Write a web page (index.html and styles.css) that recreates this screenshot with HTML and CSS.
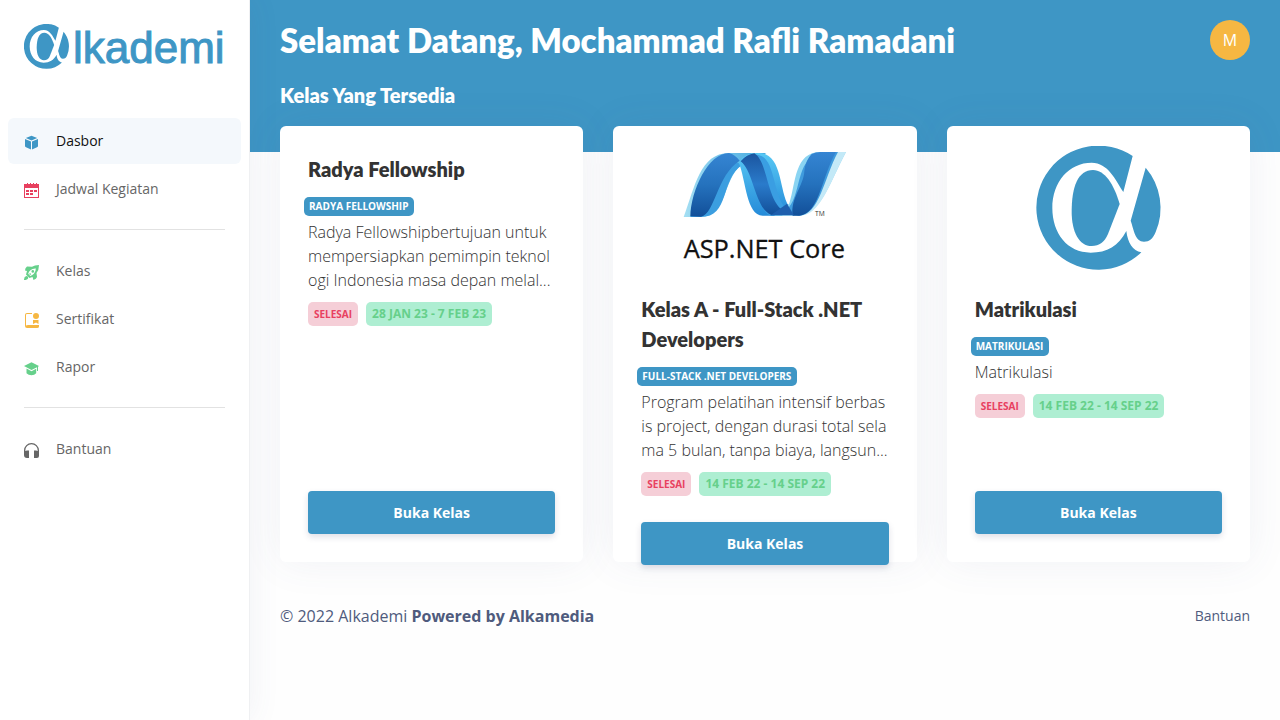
FILE: index.html
```html
<!DOCTYPE html>
<html lang="id">
<head>
<meta charset="utf-8">
<meta name="viewport" content="width=device-width, initial-scale=1">
<title>Alkademi - Dasbor</title>
<link rel="stylesheet" href="styles.css">
</head>
<body>
<svg class="defs" width="0" height="0" aria-hidden="true">
  <symbol id="alpha" viewBox="48 48 372 372">
    <path d="M336 78A186 186 0 1 0 362 367C336 362 321 338 317 303C293 348 260 368 210 368C140 368 95 310 95 235C95 155 145 98 213 98C262 98 285 150 308 186Z"/>
    <path d="M217 120C252 120 280 163 297 222L262 312C252 336 236 348 213 348C175 348 153 305 153 245C153 170 172 120 217 120Z"/>
    <path d="M375 113A186 186 0 0 1 405 306C396 328 386 335 370 335C343 335 340 300 330 272Z"/>
  </symbol>
</svg>
<div class="layout">
  <aside class="sidebar">
    <a class="brand" href="#"><svg class="brand-mark" aria-hidden="true"><use href="#alpha"/></svg><span>lkademi</span></a>
    <nav class="nav">
      <a class="nav-item active" href="#">
        <svg class="icon blue" viewBox="0 0 15 15"><path d="M7.500.8l5.700 2.300-5.700 2.400-5.700-2.400zM1 4l6 2.500v7.900L2 12.300Q1 11.900 1 11zM14 4L8 6.500v7.900l5-2.100q1-.4 1-1.300z"/></svg>
        Dasbor</a>
      <a class="nav-item" href="#">
        <svg class="icon red" viewBox="0 0 15 15"><path fill-rule="evenodd" d="M0 1h3V0h1v1h2V0h1v1h2V0h1v1h2V0h1v1h2v14H0zM1 5v9h13V5zM6 7h3v2H6zM10 7h3v2h-3zM2 7h3v2H2zM2 10h3v2H2zM6 10h3v2H6z"/></svg>
        Jadwal Kegiatan</a>
      <hr>
      <a class="nav-item" href="#">
        <svg class="icon green" viewBox="0 0 15 15"><path fill-rule="evenodd" d="M15 0Q10.500 0 8 1.700L3 1.500Q1 3 1 5.500l2 .5-1 3.500L5.500 13l3-1 1 3q3-1 3.500-3l-.5-4Q15 5 15 0zM11.800 3.400Q8.500 3.200 6.400 5.200 4.800 6.600 4.200 8.800L6.300 10.900Q8.500 10.300 9.900 8.700 11.900 6.600 11.800 3.400z"/><path d="M2.500 11q2 0 1.700 2Q3.500 15 0 15q-.1-3.500 2.500-4zM6 8l1.300 1.300L6 10 5.200 9z"/><circle cx="8.800" cy="6.400" r="1.300"/></svg>
        Kelas</a>
      <a class="nav-item" href="#">
        <svg class="icon amber" viewBox="0 0 15 15"><path d="M1 2Q1 0 3 0h5v1H3Q2 1 2 2v10.500Q3 12 4 12h11v1.500q0 1.500-2 1.500H3q-2 0-2-2z"/><circle cx="12" cy="3" r="3"/><path d="M9 7h5.500v4L12 9.500 9 11z"/></svg>
        Sertifikat</a>
      <a class="nav-item" href="#">
        <svg class="icon green" viewBox="0 0 15 15"><path d="M7.500 1.200L15 5l-1 .7V10h-1V6.200L7.500 9 0 5zM2.500 7.600l5 2.600 4.700-2.500v4.600q-1.700 2-4.700 2t-5-2z"/></svg>
        Rapor</a>
      <hr>
      <a class="nav-item" href="#">
        <svg class="icon gray" viewBox="0 0 15 15"><path d="M0 9V7.500a7.500 7.500 0 0 1 15 0V13q0 2-2 2h-3V7.500h2q1 0 1.700.5V7.500a6.200 6.200 0 0 0-12.400 0V8Q2 7.500 3 7.500h2V15H3q-3 0-3-3z"/></svg>
        Bantuan</a>
    </nav>
  </aside>
  <div class="main">
    <header class="hero">
      <div class="hero-top">
        <h1>Selamat Datang, Mochammad Rafli Ramadani</h1>
        <button class="avatar" type="button" aria-label="Akun">M</button>
      </div>
      <h2>Kelas Yang Tersedia</h2>
    </header>
    <main class="cards">
      <article class="card">
        <h3>Radya Fellowship</h3>
        <span class="program">RADYA FELLOWSHIP</span>
        <p>Radya Fellowshipbertujuan untuk mempersiapkan pemimpin teknologi Indonesia masa depan melal...</p>
        <div class="badges"><span class="status">SELESAI</span><span class="date">28 JAN 23 - 7 FEB 23</span></div>
        <button class="open" type="button">Buka Kelas</button>
      </article>
      <article class="card">
        <svg class="cover" viewBox="0 0 570 372" role="img" aria-label="ASP.NET Core">
          <defs>
            <linearGradient id="deep" x2="0" y2="1"><stop offset="0" stop-color="#3585d3"/><stop offset=".5" stop-color="#2572bd"/><stop offset="1" stop-color="#124f99"/></linearGradient>
            <linearGradient id="dusk" x2="0" y2="1"><stop offset="0" stop-color="#1b559f"/><stop offset=".5" stop-color="#2a7bcb"/><stop offset="1" stop-color="#124f99"/></linearGradient>
            <linearGradient id="bright" x2="0" y2="1"><stop offset="0" stop-color="#58c8f4"/><stop offset="1" stop-color="#258bd9"/></linearGradient>
            <linearGradient id="edge" x2="1" y2="0"><stop offset="0" stop-color="#a5dff3"/><stop offset="1" stop-color="#3fa6df"/></linearGradient>
          </defs>
          <g transform="translate(0 -48)">
            <path fill="url(#edge)" d="M42 261C75 173 91 69 178 69H290L252 90L215 105C160 147 172 261 93 261Z"/>
            <path fill="#3b9ee0" d="M62 261C92 190 127 96 168 79L217 105C150 150 182 261 93 261Z"/>
            <path fill="url(#deep)" d="M62 259C64 182 115 69 178 69Q196 74 210 92C140 137 137 250 94 260Z"/>
            <path fill="url(#bright)" d="M207 97Q224 69 267 69C339 69 328 183 357 228L337 257H279C230 257 229 151 207 97Z"/>
            <path fill="#3a9ee2" d="M236 80Q255 68 275 78C318 100 309 194 350 238L337 257H305C262 247 265 135 236 80Z"/>
            <path fill="url(#dusk)" d="M213 94Q231 73 254 70C294 94 291 206 338 240L320 255H305C256 237 253 125 213 94Z"/>
            <path fill="#8ad4f2" d="M359 220C379 158 374 66 453 66H529C480 157 452 257 386 257H313Q345 239 359 220Z"/>
            <path fill="#c3e9f7" d="M497 66H529C480 157 454 257 389 257C443 216 465 128 497 66Z"/>
            <path fill="#3f9bdd" d="M453 66H505C462 145 450 257 386 257L348 243C401 195 371 94 453 66Z"/>
            <path fill="url(#deep)" d="M426 72Q438 66 453 66H499C456 139 450 250 390 257H369C362 205 402 167 404 124Q407 91 426 72Z"/>
            <path fill="#1e5fae" d="M303 256L352 221 373 256Z"/>
            <text class="tm" x="436" y="258">TM</text>
            <text class="cover-name" x="42" y="384">ASP.NET Core</text>
          </g>
        </svg>
        <h3>Kelas A - Full-Stack .NET Developers</h3>
        <span class="program">FULL-STACK .NET DEVELOPERS</span>
        <p>Program pelatihan intensif berbasis project, dengan durasi total selama 5 bulan, tanpa biaya, langsun...</p>
        <div class="badges"><span class="status">SELESAI</span><span class="date">14 FEB 22 - 14 SEP 22</span></div>
        <button class="open" type="button">Buka Kelas</button>
      </article>
      <article class="card">
        <svg class="cover blue" role="img" aria-label="Alkademi"><use href="#alpha"/></svg>
        <h3>Matrikulasi</h3>
        <span class="program">MATRIKULASI</span>
        <p>Matrikulasi</p>
        <div class="badges"><span class="status">SELESAI</span><span class="date">14 FEB 22 - 14 SEP 22</span></div>
        <button class="open" type="button">Buka Kelas</button>
      </article>
    </main>
    <footer class="footer">
      <span>© 2022 Alkademi <strong>Powered by Alkamedia</strong></span>
      <a href="#">Bantuan</a>
    </footer>
  </div>
</div>
</body>
</html>
```
FILE: styles.css
```css
* { box-sizing: border-box; }
body { margin: 0; background: #fefefe; color: #333; font-family: "Open Sans", sans-serif; font-size: 16px; }
a { color: inherit; text-decoration: none; }
button { border: 0; font-family: inherit; cursor: pointer; }
h1, h2, h3, p { margin: 0; }
h1, h2, h3 { font-family: Lato, sans-serif; font-weight: 800; }
.defs { position: absolute; }
.layout { display: flex; min-height: 100vh; }

.sidebar { flex: 0 0 250px; padding: 24px 8px; background: #fff; border-right: 1px solid #eff0f2; box-shadow: 0 0 30px rgba(82, 90, 140, .08); z-index: 1; }
.brand { display: flex; align-items: center; gap: 4px; height: 45px; padding-left: 16px; color: #3e96c5; fill: #3e96c5; font: 44px/50px "Liberation Sans", sans-serif; -webkit-text-stroke: 1px #3e96c5; }
.brand span { padding-top: 3px; }
.brand-mark { width: 45px; height: 45px; }
.nav { display: flex; flex-direction: column; gap: 2px; margin-top: 49px; }
.nav-item { display: flex; align-items: center; gap: 17px; height: 46px; padding: 0 16px 2px; border-radius: 6px; color: #666; font-size: 14px; }
.nav-item.active { background: #f4f8fc; color: #111; }
.nav hr { width: calc(100% - 32px); margin: 15px 16px 16px; border: 0; border-top: 1px solid #e2e2e2; }
.icon { width: 15px; height: 15px; margin-top: 4px; }
.blue { fill: #3e96c5; }
.red { fill: #e8405f; }
.green { fill: #66d08b; }
.amber { fill: #f6b742; }
.gray { fill: #666; }

.main { flex: 1; min-width: 0; }
.hero { height: 152px; padding: 20px 30px 0; background: #3e96c5; color: #fff; }
.hero-top { display: flex; align-items: center; justify-content: space-between; height: 40px; }
h1 { font-size: 33px; line-height: 40px; }
h2 { margin-top: 20px; font-size: 20px; line-height: 30px; }
.avatar { width: 40px; height: 40px; padding: 0; border-radius: 50%; background: #f6b742; color: #fff; font-size: 16px; font-weight: 500; }

.cards { display: grid; grid-template-columns: repeat(3, minmax(0, 1fr)); grid-auto-rows: 436px; gap: 30px; margin-top: -26px; padding: 0 30px; }
.card { display: flex; flex-direction: column; align-items: flex-start; padding: 28px; border-radius: 6px; background: #fff; box-shadow: 0 0 40px rgba(82, 90, 140, .08); }
.cover { flex: none; width: 100%; height: 124px; margin: -8px 0 24px; }
.cover-name { font: 76px "Open Sans", sans-serif; fill: #111; stroke: #111; stroke-width: 1px; }
.tm { font: 20px "Open Sans", sans-serif; fill: #333; }
h3 { font-size: 20px; line-height: 30px; }
.program { margin: 13px 0 4px -4px; padding: 0 6px 0 5px; border-radius: 5px; background: #3e96c5; color: #fff; font-size: 10px; font-weight: 700; line-height: 19px; }
.card p { flex: none; font-weight: 300; line-height: 24px; word-break: break-all; }
.badges { display: flex; gap: 8px; margin: 10px 0 26px; font-weight: 700; line-height: 24px; }
.badges span { padding: 0 6px; border-radius: 5px; }
.status { background: #f5ced7; color: #e8405f; font-size: 10px; }
.date { background: #aeeed2; color: #66d08b; font-size: 12px; }
.open { flex: none; width: 100%; height: 43px; margin-top: auto; border-radius: 4px; background: #3e96c5; color: #fff; font-size: 14px; font-weight: 700; box-shadow: 0 3px 6px rgba(50, 50, 93, .15); }

.footer { display: flex; align-items: center; justify-content: space-between; padding: 42px 30px; color: #4f5b7d; line-height: 24px; }
.footer a { font-size: 14px; }
```
